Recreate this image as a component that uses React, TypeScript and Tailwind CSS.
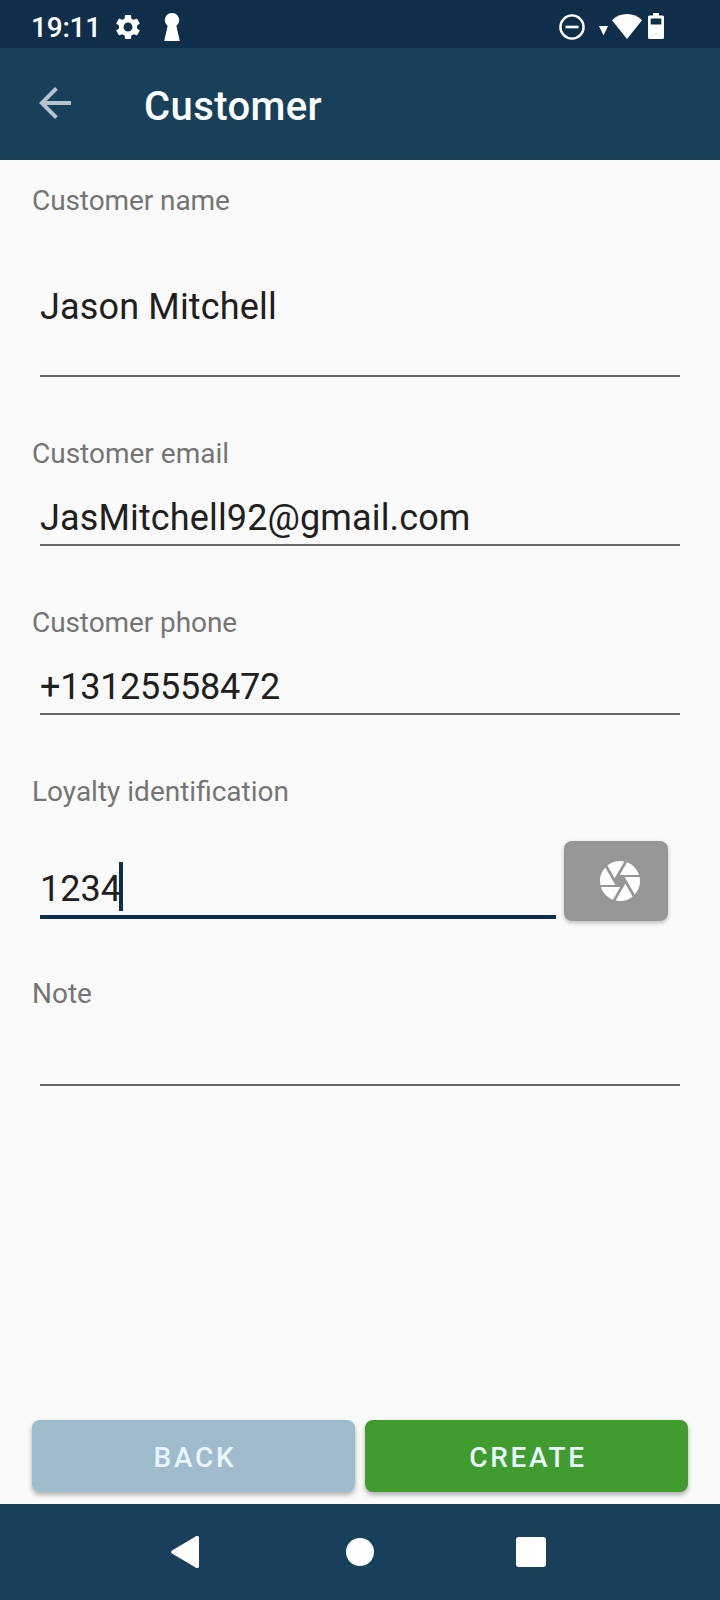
import { useState } from 'react';
import type { ReactNode } from 'react';
import { MdArrowBack, MdCamera, MdSettings } from 'react-icons/md';

function StatusBar() {
  return (
    <div className="flex h-12 items-start justify-between bg-[#0f2e4a] pr-14 pl-[31px] text-white">
      <div className="flex items-start">
        <span className="mt-[11px] w-[82px] text-[28px] leading-[33px] font-medium tracking-[-0.2px]">
          19:11
        </span>
        <MdSettings className="mt-3 size-[30px]" />
        <svg className="mt-3 ml-[21px] h-[30px] w-4" viewBox="0 0 16 30" fill="currentColor">
          <path d="M8 1a7.2 7.2 0 0 1 4.4 12.9L15.8 29H.2L3.6 13.9A7.2 7.2 0 0 1 8 1z" />
        </svg>
      </div>
      <div className="flex items-start">
        <svg className="mt-3.5 size-[26px]" viewBox="0 0 26 26" fill="none" stroke="currentColor">
          <circle cx="13" cy="13" r="11.6" strokeWidth="2.4" />
          <path d="M6.500 13h13" strokeWidth="2.6" />
        </svg>
        <svg className="mt-[26px] ml-3.5 h-[10px] w-[9px]" viewBox="0 0 9 10" fill="currentColor">
          <path d="M0 0h9L4.5 9.6z" />
        </svg>
        <svg className="mt-3.5 ml-1 h-[25px] w-[30px]" viewBox="0 0 30 25" fill="currentColor">
          <path d="M15 25 0 6.300C4 2.200 9 0 15 0s11 2.200 15 6.300z" />
        </svg>
        <svg className="mt-[13px] ml-1.5 h-[26px] w-4" viewBox="0 0 16 26" fill="currentColor">
          <path
            fillRule="evenodd"
            d="M5 0h6v2.600h3.500A1.500 1.500 0 0 1 16 4.100v20.400a1.500 1.500 0 0 1-1.500 1.500h-13A1.500 1.500 0 0 1 0 24.500V4.100a1.500 1.500 0 0 1 1.500-1.500H5zM2.700 5.500v6h10.600v-6z"
          />
        </svg>
      </div>
    </div>
  );
}

function AppBar({ title }: { title: string }) {
  return (
    <header className="flex h-28 items-start bg-[#19405a]">
      <button type="button" aria-label="Back" className="mt-[31px] ml-[31px]">
        <MdArrowBack className="size-12 text-[#b6c4cd]" />
      </button>
      <h1 className="mt-[35px] ml-[65px] text-[40px] leading-[47px] font-medium tracking-[0.4px] text-white">
        {title}
      </h1>
    </header>
  );
}

function Label({ children }: { children: ReactNode }) {
  return (
    <label className="block text-[28px] leading-[33px] text-[#757575]">{children}</label>
  );
}

// Single line field, underlined 5px below the text box.
function Value({ children }: { children?: ReactNode }) {
  return (
    <div className="mx-2 h-[49px] border-b-2 border-[#666666] text-[36px] leading-[42px] text-[#202020]">
      {children}
    </div>
  );
}

function NavBar() {
  return (
    <nav className="flex h-24 items-center bg-[#19405a] pl-[171px] text-white">
      <svg className="h-8 w-7" viewBox="0 0 28 32" fill="currentColor">
        <path d="M25 .3 1 14.600a1.700 1.700 0 0 0 0 2.800L25 31.700c1.500.8 3 .2 3-1.500V1.800C28 .1 26.500-.5 25 .3z" />
      </svg>
      <div className="ml-[147px] size-7 rounded-full bg-white" />
      <div className="ml-[142px] size-[30px] rounded-[3px] bg-white" />
    </nav>
  );
}

export default function App() {
  const [customer] = useState({
    name: 'Jason Mitchell',
    email: 'JasMitchell92@gmail.com',
    phone: '+13125558472',
    loyalty: '1234',
  });

  return (
    <div className="flex h-[1600px] w-[720px] flex-col bg-[#fafafa] font-['Roboto',sans-serif]">
      <StatusBar />
      <AppBar title="Customer" />

      <main className="flex-1 px-8 pt-6">
        <div className="tracking-[-0.08px]">
          <Label>Customer name</Label>
        </div>
        <div className="mx-2 mt-[69px] h-[91px] border-b-2 border-[#666666] text-[36px] leading-[42px] tracking-[0.16px] text-[#202020]">
          {customer.name}
        </div>

        <div className="mt-[60px]">
          <Label>Customer email</Label>
          <div className="mt-[27px] tracking-[0.14px]">
            <Value>{customer.email}</Value>
          </div>
        </div>

        <div className="mt-[60px] tracking-[-0.08px]">
          <Label>Customer phone</Label>
          <div className="mt-[27px] tracking-[-0.25px]">
            <Value>{customer.phone}</Value>
          </div>
        </div>

        <div className="mt-[60px]">
          <Label>Loyalty identification</Label>
          <div className="mt-[33px] flex items-start gap-2 pr-5 pl-2">
            <div className="mt-[21px] flex h-[57px] flex-1 border-b-4 border-[#0f2e4a] text-[36px] leading-[42px] text-[#202020]">
              <span className="mt-1.5">{customer.loyalty}</span>
              <span className="-ml-0.5 h-[49px] w-1 bg-[#0f2e4a]" />
            </div>
            <button
              type="button"
              aria-label="Scan"
              className="flex h-20 w-[104px] items-center justify-center rounded-lg bg-[#969696] pl-2 shadow-[0_2px_4px_rgba(0,0,0,0.25)]"
            >
              <MdCamera className="size-12 text-white" />
            </button>
          </div>
        </div>

        <div className="mt-14">
          <Label>Note</Label>
          <div className="mt-[27px]">
            <Value />
          </div>
        </div>
      </main>

      <footer className="flex h-[84px] items-start gap-2.5 px-8 text-[28px] leading-[33px] font-medium tracking-[2.7px] text-[#e9f6ff]">
        <button
          type="button"
          className="h-[72px] flex-1 rounded-lg bg-[#9fbbcc] pt-0.5 pl-[3px] shadow-[0_3px_5px_rgba(0,0,0,0.3)]"
        >
          BACK
        </button>
        <button
          type="button"
          className="h-[72px] flex-1 rounded-lg bg-[#419c2f] pt-0.5 pl-[3px] shadow-[0_3px_5px_rgba(0,0,0,0.3)]"
        >
          CREATE
        </button>
      </footer>

      <NavBar />
    </div>
  );
}
